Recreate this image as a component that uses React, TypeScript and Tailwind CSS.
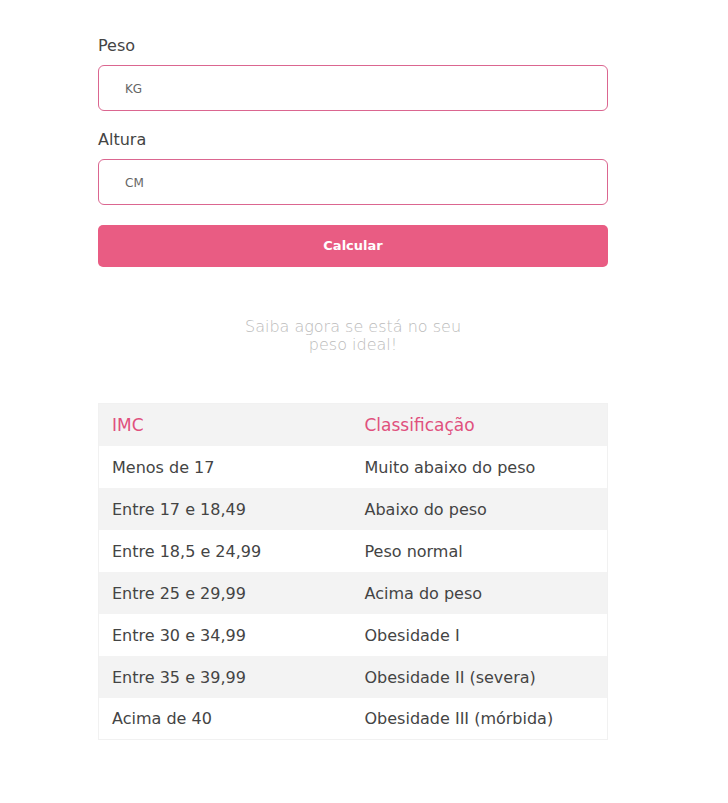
import * as React from 'react'

const ROWS: [string, string][] = [
  ['Menos de 17', 'Muito abaixo do peso'],
  ['Entre 17 e 18,49', 'Abaixo do peso'],
  ['Entre 18,5 e 24,99', 'Peso normal'],
  ['Entre 25 e 29,99', 'Acima do peso'],
  ['Entre 30 e 34,99', 'Obesidade I'],
  ['Entre 35 e 39,99', 'Obesidade II (severa)'],
  ['Acima de 40', 'Obesidade III (mórbida)'],
]

function Field({ label, unit }: { label: string; unit: string }) {
  return (
    <div className="flex flex-col">
      <label className="text-[16px] leading-[20px] text-[#444] mb-[9px] pt-[1px]">{label}</label>
      <input
        type="text"
        placeholder={unit}
        className="h-[46px] w-full rounded-[6px] border border-[#db6690] bg-white pl-[26px] pt-[1px] text-[12px] text-[#555] placeholder:text-[#666] outline-none"
      />
    </div>
  )
}

export default function App() {
  return (
    <div className="min-h-[803px] bg-white font-['DejaVu_Sans',sans-serif]">
      <div className="ml-[98px] w-[510px] pt-[35px]">
        <div className="flex flex-col gap-[18px]">
          <Field label="Peso" unit="KG" />
          <Field label="Altura" unit="CM" />
        </div>
        <button
          type="button"
          className="mt-[20px] h-[42px] w-full rounded-[5px] bg-[#e95c83] text-[13px] font-bold text-white"
        >
          Calcular
        </button>

        <p className="mx-auto mt-[51px] w-[250px] text-center text-[16px] leading-[18px] font-light text-[#bbbbbb]">
          Saiba agora se está no seu peso ideal!
        </p>

        <table className="mt-[49px] w-full border border-[#f1f1f1] border-collapse text-[16px]">
          <thead>
            <tr className="bg-[#f3f3f3]">
              <th className="h-[42px] w-[254px] pl-[13px] pt-[1px] text-left font-normal text-[17px] text-[#e0507d]">IMC</th>
              <th className="h-[42px] pl-[12px] pt-[1px] text-left font-normal text-[17px] text-[#e0507d]">Classificação</th>
            </tr>
          </thead>
          <tbody>
            {ROWS.map(([imc, cls], i) => (
              <tr key={imc} className={i % 2 === 1 ? 'bg-[#f3f3f3]' : 'bg-white'}>
                <td className="h-[42px] pl-[13px] pt-[2px] text-[#444]">{imc}</td>
                <td className="h-[42px] pl-[12px] pt-[2px] text-[#444]">{cls}</td>
              </tr>
            ))}
          </tbody>
        </table>
      </div>
    </div>
  )
}
